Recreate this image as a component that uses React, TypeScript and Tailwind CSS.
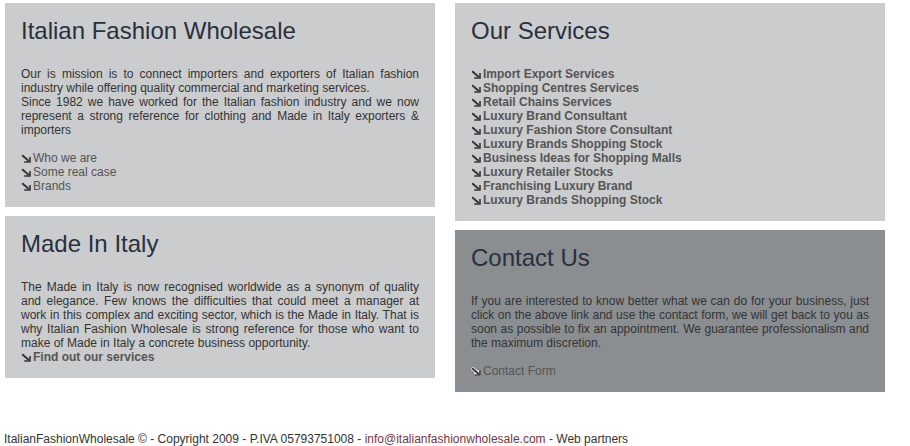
import React from "react";

const services = [
  "Import Export Services",
  "Shopping Centres Services",
  "Retail Chains Services",
  "Luxury Brand Consultant",
  "Luxury Fashion Store Consultant",
  "Luxury Brands Shopping Stock",
  "Business Ideas for Shopping Malls",
  "Luxury Retailer Stocks",
  "Franchising Luxury Brand",
  "Luxury Brands Shopping Stock",
];

function Arrow({ halo = false }: { halo?: boolean }) {
  return (
    <svg width="10" height="9" viewBox="0 0 10 9" className="mr-[2px] inline-block shrink-0">
      {halo && (
        <g stroke="#fff" strokeWidth="3.4" fill="none">
          <path d="M1 1 L8 7" />
          <path d="M3 8 H9 V3" />
        </g>
      )}
      <g stroke="#333" fill="none">
        <path d="M1.2 1.2 L7.8 7" strokeWidth="1.9" />
        <path d="M3.2 8 H9 V3" strokeWidth="1.6" />
      </g>
    </svg>
  );
}

function LinkLine({
  children,
  bold = false,
  halo = false,
}: {
  children: React.ReactNode;
  bold?: boolean;
  halo?: boolean;
}) {
  return (
    <div className="flex items-center">
      <Arrow halo={halo} />
      <a href="#" className={bold ? "font-bold text-[#555]" : "text-[#555]"}>
        {children}
      </a>
    </div>
  );
}

function Box({
  title,
  dark = false,
  children,
}: {
  title: string;
  dark?: boolean;
  children: React.ReactNode;
}) {
  return (
    <section
      className={`${dark ? "bg-[#8a8e91]" : "bg-[#cbcccd]"} px-4 pt-[14px] pb-[14px]`}
    >
      <h2 className="text-[24px] leading-[28px] text-[#283040]">{title}</h2>
      <div className="mt-[22px] text-[12px] leading-[14px] text-[#333]">{children}</div>
    </section>
  );
}

export default function App() {
  return (
    <div className="min-h-[446px] bg-white font-['Liberation_Sans',Arial,sans-serif] text-[#333]">
      <div className="flex items-start gap-5 pl-[5px] pt-[3px]">
        <div className="flex w-[430px] flex-col gap-[9px]">
          <Box title="Italian Fashion Wholesale">
            <p className="text-justify">
              Our is mission is to connect importers and exporters of Italian fashion
              industry while offering quality commercial and marketing services.
              <br />
              Since 1982 we have worked for the Italian fashion industry and we now
              represent a strong reference for clothing and Made in Italy exporters
              &amp; importers
            </p>
            <div className="mt-[14px]">
              <LinkLine>Who we are</LinkLine>
              <LinkLine>Some real case</LinkLine>
              <LinkLine>Brands</LinkLine>
            </div>
          </Box>
          <Box title="Made In Italy">
            <p className="text-justify">
              The Made in Italy is now recognised worldwide as a synonym of quality and
              elegance. Few knows the difficulties that could meet a manager at work in
              this complex and exciting sector, which is the Made in Italy. That is why
              Italian Fashion Wholesale is strong reference for those who want to make of
              Made in Italy a concrete business opportunity.
            </p>
            <LinkLine bold>Find out our services</LinkLine>
          </Box>
        </div>
        <div className="flex w-[430px] flex-col gap-[9px]">
          <Box title="Our Services">
            {services.map((s, i) => (
              <LinkLine key={i} bold>
                {s}
              </LinkLine>
            ))}
          </Box>
          <Box title="Contact Us" dark>
            <p className="text-justify">
              If you are interested to know better what we can do for your business, just
              click on the above link and use the contact form, we will get back to you as
              soon as possible to fix an appointment. We guarantee professionalism and the
              maximum discretion.
            </p>
            <div className="mt-[14px]">
              <LinkLine halo>Contact Form</LinkLine>
            </div>
          </Box>
        </div>
      </div>
      <footer className="mt-[40px] pl-[4px] text-[12px] leading-[14px] text-[#333]">
        ItalianFashionWholesale © - Copyright 2009 - P.IVA 05793751008 -{" "}
        <a href="#" className="text-[#7a3546]">
          info@italianfashionwholesale.com
        </a>{" "}
        - Web partners
      </footer>
    </div>
  );
}
